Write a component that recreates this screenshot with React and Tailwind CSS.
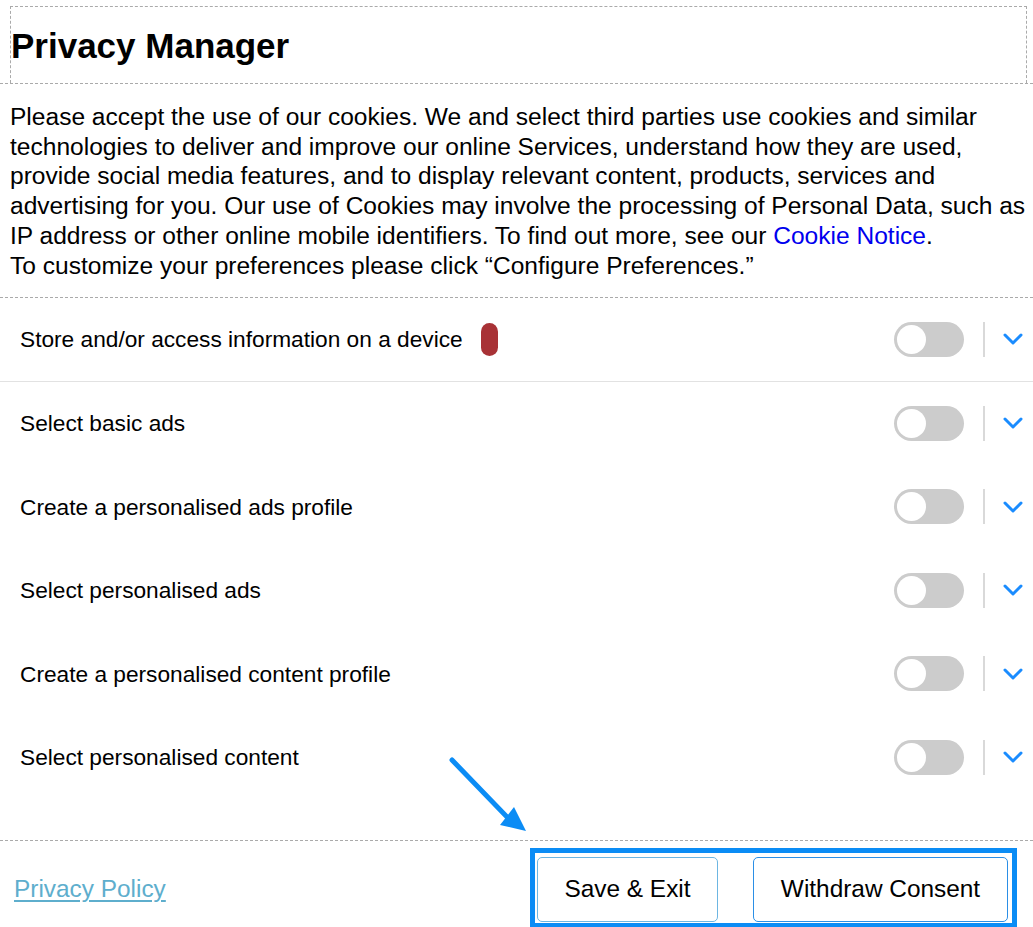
import React from "react";

const purposes = [
  "Store and/or access information on a device",
  "Select basic ads",
  "Create a personalised ads profile",
  "Select personalised ads",
  "Create a personalised content profile",
  "Select personalised content",
];

const Toggle = () => (
  <div className="w-[70px] h-[35px] rounded-full bg-[#cccccc] flex items-center px-[3px]">
    <div className="w-[29px] h-[29px] rounded-full bg-white" />
  </div>
);

const Chevron = () => (
  <svg width="20" height="12" viewBox="0 0 20 12" fill="none">
    <path d="M2 2 L10 10 L18 2" stroke="#1a8cff" strokeWidth="3" strokeLinecap="round" strokeLinejoin="round" />
  </svg>
);

const PurposeRow = ({ label, first }) => (
  <div
    className={`h-[83.5px] flex items-center pl-[20px] ${first ? "border-b border-[#e2e2e2]" : ""}`}
  >
    <span className="text-[22.7px] text-black">{label}</span>
    {first && <span className="ml-[18px] w-[17px] h-[33px] rounded-[9px] bg-[#a83236]" />}
    <div className="ml-auto flex items-center">
      <Toggle />
      <div className="ml-[19px] w-[2px] h-[35px] bg-[#d9d9d9]" />
      <div className="ml-[18px] mr-[10px] flex items-center">
        <Chevron />
      </div>
    </div>
  </div>
);

export default function App() {
  return (
    <div className="relative w-[1033px] h-[927px] overflow-hidden bg-white text-black font-['Liberation_Sans',Arial,sans-serif]">
      {/* header */}
      <div className="pt-[6px] pl-[10px] pr-[6px] border-b border-dashed border-[#aaaaaa]">
        <div className="h-[77px] flex items-center border-t border-x border-dashed border-[#aaaaaa]">
          <h1 className="text-[35px] font-bold leading-none">Privacy Manager</h1>
        </div>
      </div>

      {/* intro */}
      <div className="pt-[18px] pb-[17px] pl-[10px] pr-[4px] border-b border-dashed border-[#aaaaaa]">
        <p className="text-[24.55px] leading-[29.7px]">
          Please accept the use of our cookies. We and select third parties use cookies and similar
          technologies to deliver and improve our online Services, understand how they are used,
          provide social media features, and to display relevant content, products, services and
          advertising for you. Our use of Cookies may involve the processing of Personal Data, such as
          IP address or other online mobile identifiers. To find out more, see our{" "}
          <a className="text-[#0000ee]">Cookie Notice</a>.
          <br />
          To customize your preferences please click “Configure Preferences.”
        </p>
      </div>

      {/* purposes */}
      <div className="pb-[41px] border-b border-dashed border-[#aaaaaa]">
        {purposes.map((p, i) => (
          <PurposeRow key={p} label={p} first={i === 0} />
        ))}
      </div>

      {/* footer */}
      <div className="pt-[7px] pl-[14px] pr-[16px] flex items-start justify-between">
        <a className="mt-[23px] text-[24.4px] text-[#5eaecd] underline underline-offset-[3px]">Privacy Policy</a>
        <div className="border-[5px] border-[#0b8cf5] pt-[4px] pb-[1px] pl-[2px] pr-[4px] flex gap-[35px]">
          <button className="w-[181px] h-[65px] rounded-[5px] border border-[#6db6e2] bg-white text-[24.4px]">
            Save &amp; Exit
          </button>
          <button className="w-[255px] h-[65px] rounded-[5px] border border-[#2b8fe6] bg-white text-[24.4px]">
            Withdraw Consent
          </button>
        </div>
      </div>

      {/* annotation arrow */}
      <svg className="absolute left-[440px] top-[750px]" width="100" height="100" viewBox="0 0 100 100">
        <line x1="12" y1="10" x2="70" y2="70" stroke="#0b8cf5" strokeWidth="5" strokeLinecap="round" />
        <polygon points="86,81 74,57 60,75" fill="#0b8cf5" />
      </svg>
    </div>
  );
}
